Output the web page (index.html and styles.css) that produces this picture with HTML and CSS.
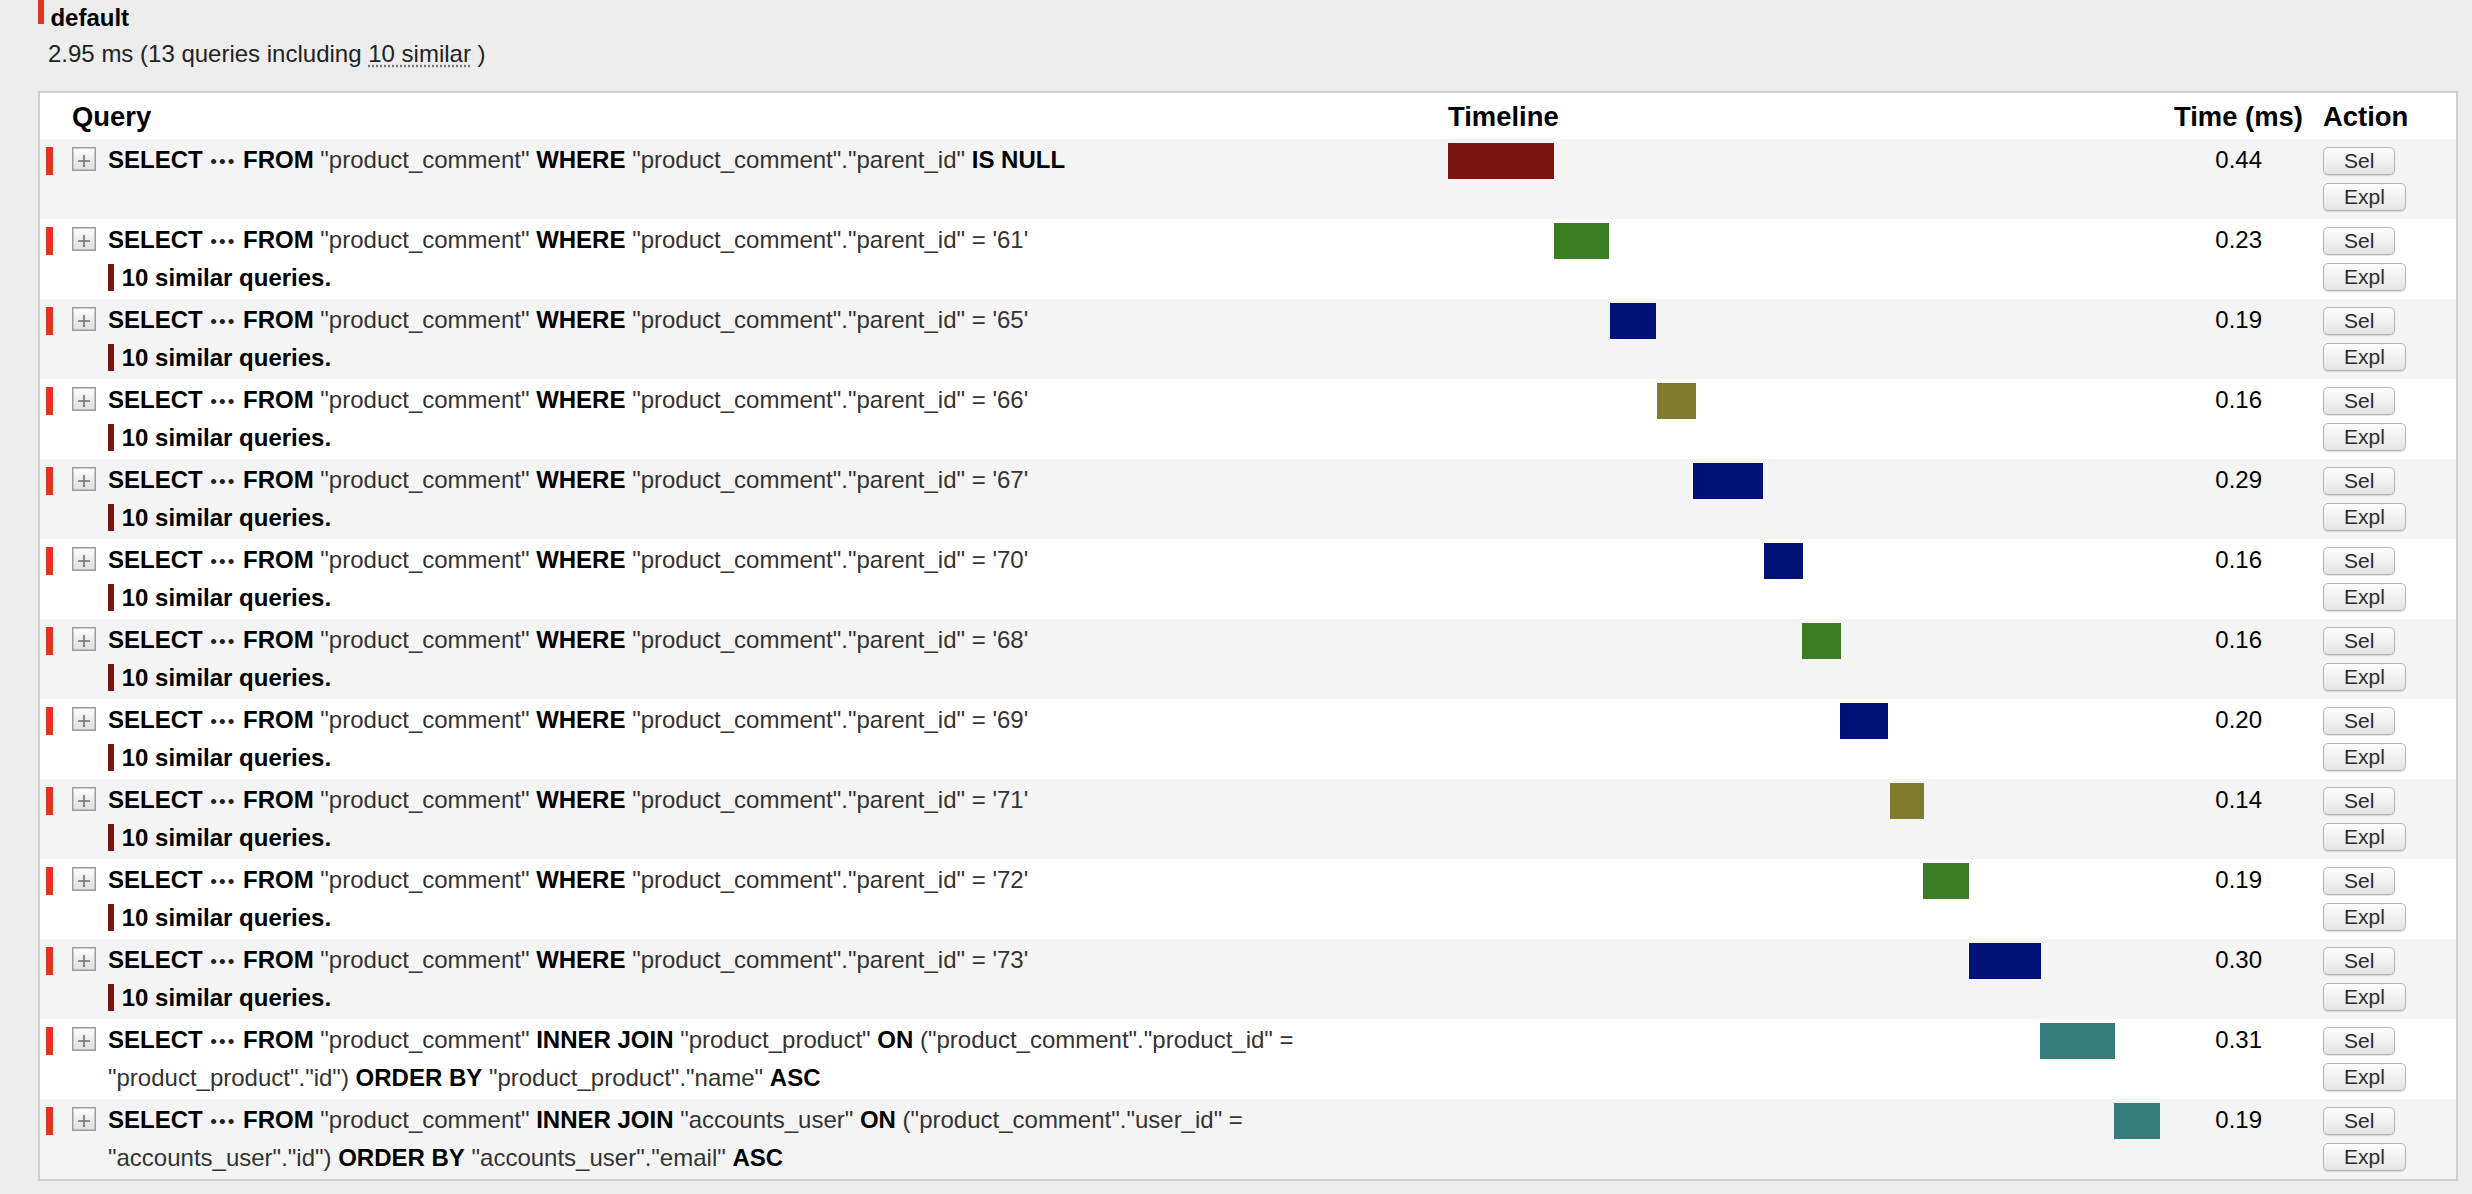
FILE: index.html
```html
<!DOCTYPE html>
<html lang="en">
<head>
<meta charset="utf-8">
<title>SQL queries</title>
<link rel="stylesheet" href="styles.css">
</head>
<body>
<div class="db-head"><span class="db-mark"></span><h4 class="db-name">default</h4></div>
<p class="db-summary">2.95 ms (13 queries including <abbr class="similar-link">10 similar</abbr> )</p>

<table class="sql-table">
  <colgroup>
    <col class="c-mark"><col class="c-query"><col class="c-timeline"><col class="c-time"><col class="c-action">
  </colgroup>
  <thead>
    <tr><th></th><th>Query</th><th>Timeline</th><th>Time (ms)</th><th>Action</th></tr>
  </thead>
  <tbody>
    <tr>
      <td class="mark"><span></span></td>
      <td class="query"><div class="qwrap"><span class="toggle"><svg width="24" height="24" viewBox="0 0 24 24"><defs><linearGradient id="tg" x1="0" y1="0" x2="0" y2="1"><stop offset="0" stop-color="#ffffff"/><stop offset="1" stop-color="#dedede"/></linearGradient></defs><rect x="0.75" y="0.75" width="22.5" height="22.5" fill="url(#tg)" stroke="#9b9b9b" stroke-width="1.5"/><path d="M6 14H18M12 8V20" stroke="#6d6d6d" stroke-width="1.6"/></svg></span><div class="qtext"><strong>SELECT</strong> <span class="dots">&#8226;&#8226;&#8226;</span> <strong>FROM</strong> "product_comment" <strong>WHERE</strong> "product_comment"."parent_id" <strong>IS NULL</strong></div></div></td>
      <td class="timeline"><div class="track"><div class="bar" style="margin-left:0%;width:14.92%;background:#781510"></div></div></td>
      <td class="time">0.44</td>
      <td class="action"><button class="btn">Sel</button><button class="btn">Expl</button></td>
    </tr>
    <tr>
      <td class="mark"><span></span></td>
      <td class="query"><div class="qwrap"><span class="toggle"><svg width="24" height="24" viewBox="0 0 24 24"><rect x="0.75" y="0.75" width="22.5" height="22.5" fill="url(#tg)" stroke="#9b9b9b" stroke-width="1.5"/><path d="M6 14H18M12 8V20" stroke="#6d6d6d" stroke-width="1.6"/></svg></span><div class="qtext"><strong>SELECT</strong> <span class="dots">&#8226;&#8226;&#8226;</span> <strong>FROM</strong> "product_comment" <strong>WHERE</strong> "product_comment"."parent_id" = '61'<div class="sim"><span>10 similar queries.</span></div></div></div></td>
      <td class="timeline"><div class="track"><div class="bar" style="margin-left:14.89%;width:7.79%;background:#3a7d22"></div></div></td>
      <td class="time">0.23</td>
      <td class="action"><button class="btn">Sel</button><button class="btn">Expl</button></td>
    </tr>
    <tr>
      <td class="mark"><span></span></td>
      <td class="query"><div class="qwrap"><span class="toggle"><svg width="24" height="24" viewBox="0 0 24 24"><rect x="0.75" y="0.75" width="22.5" height="22.5" fill="url(#tg)" stroke="#9b9b9b" stroke-width="1.5"/><path d="M6 14H18M12 8V20" stroke="#6d6d6d" stroke-width="1.6"/></svg></span><div class="qtext"><strong>SELECT</strong> <span class="dots">&#8226;&#8226;&#8226;</span> <strong>FROM</strong> "product_comment" <strong>WHERE</strong> "product_comment"."parent_id" = '65'<div class="sim"><span>10 similar queries.</span></div></div></div></td>
      <td class="timeline"><div class="track"><div class="bar" style="margin-left:22.75%;width:6.45%;background:#001277"></div></div></td>
      <td class="time">0.19</td>
      <td class="action"><button class="btn">Sel</button><button class="btn">Expl</button></td>
    </tr>
    <tr>
      <td class="mark"><span></span></td>
      <td class="query"><div class="qwrap"><span class="toggle"><svg width="24" height="24" viewBox="0 0 24 24"><rect x="0.75" y="0.75" width="22.5" height="22.5" fill="url(#tg)" stroke="#9b9b9b" stroke-width="1.5"/><path d="M6 14H18M12 8V20" stroke="#6d6d6d" stroke-width="1.6"/></svg></span><div class="qtext"><strong>SELECT</strong> <span class="dots">&#8226;&#8226;&#8226;</span> <strong>FROM</strong> "product_comment" <strong>WHERE</strong> "product_comment"."parent_id" = '66'<div class="sim"><span>10 similar queries.</span></div></div></div></td>
      <td class="timeline"><div class="track"><div class="bar" style="margin-left:29.35%;width:5.42%;background:#807a2a"></div></div></td>
      <td class="time">0.16</td>
      <td class="action"><button class="btn">Sel</button><button class="btn">Expl</button></td>
    </tr>
    <tr>
      <td class="mark"><span></span></td>
      <td class="query"><div class="qwrap"><span class="toggle"><svg width="24" height="24" viewBox="0 0 24 24"><rect x="0.75" y="0.75" width="22.5" height="22.5" fill="url(#tg)" stroke="#9b9b9b" stroke-width="1.5"/><path d="M6 14H18M12 8V20" stroke="#6d6d6d" stroke-width="1.6"/></svg></span><div class="qtext"><strong>SELECT</strong> <span class="dots">&#8226;&#8226;&#8226;</span> <strong>FROM</strong> "product_comment" <strong>WHERE</strong> "product_comment"."parent_id" = '67'<div class="sim"><span>10 similar queries.</span></div></div></div></td>
      <td class="timeline"><div class="track"><div class="bar" style="margin-left:34.41%;width:9.83%;background:#001277"></div></div></td>
      <td class="time">0.29</td>
      <td class="action"><button class="btn">Sel</button><button class="btn">Expl</button></td>
    </tr>
    <tr>
      <td class="mark"><span></span></td>
      <td class="query"><div class="qwrap"><span class="toggle"><svg width="24" height="24" viewBox="0 0 24 24"><rect x="0.75" y="0.75" width="22.5" height="22.5" fill="url(#tg)" stroke="#9b9b9b" stroke-width="1.5"/><path d="M6 14H18M12 8V20" stroke="#6d6d6d" stroke-width="1.6"/></svg></span><div class="qtext"><strong>SELECT</strong> <span class="dots">&#8226;&#8226;&#8226;</span> <strong>FROM</strong> "product_comment" <strong>WHERE</strong> "product_comment"."parent_id" = '70'<div class="sim"><span>10 similar queries.</span></div></div></div></td>
      <td class="timeline"><div class="track"><div class="bar" style="margin-left:44.38%;width:5.42%;background:#001277"></div></div></td>
      <td class="time">0.16</td>
      <td class="action"><button class="btn">Sel</button><button class="btn">Expl</button></td>
    </tr>
    <tr>
      <td class="mark"><span></span></td>
      <td class="query"><div class="qwrap"><span class="toggle"><svg width="24" height="24" viewBox="0 0 24 24"><rect x="0.75" y="0.75" width="22.5" height="22.5" fill="url(#tg)" stroke="#9b9b9b" stroke-width="1.5"/><path d="M6 14H18M12 8V20" stroke="#6d6d6d" stroke-width="1.6"/></svg></span><div class="qtext"><strong>SELECT</strong> <span class="dots">&#8226;&#8226;&#8226;</span> <strong>FROM</strong> "product_comment" <strong>WHERE</strong> "product_comment"."parent_id" = '68'<div class="sim"><span>10 similar queries.</span></div></div></div></td>
      <td class="timeline"><div class="track"><div class="bar" style="margin-left:49.72%;width:5.42%;background:#3a7d22"></div></div></td>
      <td class="time">0.16</td>
      <td class="action"><button class="btn">Sel</button><button class="btn">Expl</button></td>
    </tr>
    <tr>
      <td class="mark"><span></span></td>
      <td class="query"><div class="qwrap"><span class="toggle"><svg width="24" height="24" viewBox="0 0 24 24"><rect x="0.75" y="0.75" width="22.5" height="22.5" fill="url(#tg)" stroke="#9b9b9b" stroke-width="1.5"/><path d="M6 14H18M12 8V20" stroke="#6d6d6d" stroke-width="1.6"/></svg></span><div class="qtext"><strong>SELECT</strong> <span class="dots">&#8226;&#8226;&#8226;</span> <strong>FROM</strong> "product_comment" <strong>WHERE</strong> "product_comment"."parent_id" = '69'<div class="sim"><span>10 similar queries.</span></div></div></div></td>
      <td class="timeline"><div class="track"><div class="bar" style="margin-left:55.06%;width:6.78%;background:#001277"></div></div></td>
      <td class="time">0.20</td>
      <td class="action"><button class="btn">Sel</button><button class="btn">Expl</button></td>
    </tr>
    <tr>
      <td class="mark"><span></span></td>
      <td class="query"><div class="qwrap"><span class="toggle"><svg width="24" height="24" viewBox="0 0 24 24"><rect x="0.75" y="0.75" width="22.5" height="22.5" fill="url(#tg)" stroke="#9b9b9b" stroke-width="1.5"/><path d="M6 14H18M12 8V20" stroke="#6d6d6d" stroke-width="1.6"/></svg></span><div class="qtext"><strong>SELECT</strong> <span class="dots">&#8226;&#8226;&#8226;</span> <strong>FROM</strong> "product_comment" <strong>WHERE</strong> "product_comment"."parent_id" = '71'<div class="sim"><span>10 similar queries.</span></div></div></div></td>
      <td class="timeline"><div class="track"><div class="bar" style="margin-left:62.08%;width:4.75%;background:#807a2a"></div></div></td>
      <td class="time">0.14</td>
      <td class="action"><button class="btn">Sel</button><button class="btn">Expl</button></td>
    </tr>
    <tr>
      <td class="mark"><span></span></td>
      <td class="query"><div class="qwrap"><span class="toggle"><svg width="24" height="24" viewBox="0 0 24 24"><rect x="0.75" y="0.75" width="22.5" height="22.5" fill="url(#tg)" stroke="#9b9b9b" stroke-width="1.5"/><path d="M6 14H18M12 8V20" stroke="#6d6d6d" stroke-width="1.6"/></svg></span><div class="qtext"><strong>SELECT</strong> <span class="dots">&#8226;&#8226;&#8226;</span> <strong>FROM</strong> "product_comment" <strong>WHERE</strong> "product_comment"."parent_id" = '72'<div class="sim"><span>10 similar queries.</span></div></div></div></td>
      <td class="timeline"><div class="track"><div class="bar" style="margin-left:66.71%;width:6.45%;background:#3a7d22"></div></div></td>
      <td class="time">0.19</td>
      <td class="action"><button class="btn">Sel</button><button class="btn">Expl</button></td>
    </tr>
    <tr>
      <td class="mark"><span></span></td>
      <td class="query"><div class="qwrap"><span class="toggle"><svg width="24" height="24" viewBox="0 0 24 24"><rect x="0.75" y="0.75" width="22.5" height="22.5" fill="url(#tg)" stroke="#9b9b9b" stroke-width="1.5"/><path d="M6 14H18M12 8V20" stroke="#6d6d6d" stroke-width="1.6"/></svg></span><div class="qtext"><strong>SELECT</strong> <span class="dots">&#8226;&#8226;&#8226;</span> <strong>FROM</strong> "product_comment" <strong>WHERE</strong> "product_comment"."parent_id" = '73'<div class="sim"><span>10 similar queries.</span></div></div></div></td>
      <td class="timeline"><div class="track"><div class="bar" style="margin-left:73.17%;width:10.17%;background:#001277"></div></div></td>
      <td class="time">0.30</td>
      <td class="action"><button class="btn">Sel</button><button class="btn">Expl</button></td>
    </tr>
    <tr>
      <td class="mark"><span></span></td>
      <td class="query"><div class="qwrap"><span class="toggle"><svg width="24" height="24" viewBox="0 0 24 24"><rect x="0.75" y="0.75" width="22.5" height="22.5" fill="url(#tg)" stroke="#9b9b9b" stroke-width="1.5"/><path d="M6 14H18M12 8V20" stroke="#6d6d6d" stroke-width="1.6"/></svg></span><div class="qtext"><strong>SELECT</strong> <span class="dots">&#8226;&#8226;&#8226;</span> <strong>FROM</strong> "product_comment" <strong>INNER JOIN</strong> "product_product" <strong>ON</strong> ("product_comment"."product_id" = "product_product"."id") <strong>ORDER BY</strong> "product_product"."name" <strong>ASC</strong></div></div></td>
      <td class="timeline"><div class="track"><div class="bar" style="margin-left:83.15%;width:10.51%;background:#357c7d"></div></div></td>
      <td class="time">0.31</td>
      <td class="action"><button class="btn">Sel</button><button class="btn">Expl</button></td>
    </tr>
    <tr>
      <td class="mark"><span></span></td>
      <td class="query"><div class="qwrap"><span class="toggle"><svg width="24" height="24" viewBox="0 0 24 24"><rect x="0.75" y="0.75" width="22.5" height="22.5" fill="url(#tg)" stroke="#9b9b9b" stroke-width="1.5"/><path d="M6 14H18M12 8V20" stroke="#6d6d6d" stroke-width="1.6"/></svg></span><div class="qtext"><strong>SELECT</strong> <span class="dots">&#8226;&#8226;&#8226;</span> <strong>FROM</strong> "product_comment" <strong>INNER JOIN</strong> "accounts_user" <strong>ON</strong> ("product_comment"."user_id" = "accounts_user"."id") <strong>ORDER BY</strong> "accounts_user"."email" <strong>ASC</strong></div></div></td>
      <td class="timeline"><div class="track"><div class="bar" style="margin-left:93.54%;width:6.45%;background:#357c7d"></div></div></td>
      <td class="time">0.19</td>
      <td class="action"><button class="btn">Sel</button><button class="btn">Expl</button></td>
    </tr>
  </tbody>
</table>
</body>
</html>
```

FILE: styles.css
```css
html, body {
  margin: 0;
  padding: 0;
}
body {
  background: #ededed;
  font-family: "Liberation Sans", Arial, Helvetica, sans-serif;
  font-size: 24px;
  color: #222;
  width: 2472px;
  height: 1194px;
  overflow: hidden;
}

.db-head {
  display: flex;
  align-items: flex-start;
  padding-left: 38px;
}
.db-mark {
  display: block;
  width: 6px;
  height: 24px;
  background: #e8321f;
}
.db-name {
  margin: 0 0 0 6.4px;
  padding-top: 6px;
  font-size: 24px;
  line-height: 24px;
  font-weight: bold;
  color: #000;
}

.db-summary {
  margin: 9px 0 22px 48px;
  line-height: 30px;
  color: #222;
}
.similar-link {
  text-decoration: underline dotted #777;
  text-underline-offset: 3px;
}

.sql-table {
  margin-left: 38px;
  width: 2420px;
  table-layout: fixed;
  border-collapse: separate;
  border-spacing: 0;
  border: 2px solid #cfcfcf;
  background: #fff;
}
.c-mark { width: 26px; }
.c-query { width: 1376px; }
.c-timeline { width: 726px; }
.c-time { width: 149px; }
.c-action { width: 139px; }

.sql-table th {
  text-align: left;
  font-size: 27.4px;
  font-weight: bold;
  color: #000;
  line-height: 45px;
  padding: 1px 6px 0;
  background: #fff;
}

.sql-table tbody tr {
  height: 80px;
}
.sql-table tbody tr:nth-child(odd) {
  background: #f4f4f4;
}
.sql-table tbody tr:nth-child(even) {
  background: #fff;
}
.sql-table td {
  vertical-align: top;
  padding: 2.6px 6px 0;
  line-height: 36.7px;
}

.mark span {
  display: block;
  width: 7px;
  height: 28.3px;
  margin-top: 5.1px;
  background: #e8321f;
}

.qwrap {
  display: flex;
  align-items: flex-start;
  gap: 12px;
}
.toggle {
  flex: none;
  display: block;
  width: 24px;
  height: 24px;
  margin-top: 5.1px;
}
.toggle svg {
  display: block;
}
.qtext {
  flex: 1;
  min-width: 0;
  color: #333;
}
.qtext strong {
  color: #000;
  font-weight: bold;
}
.dots {
  color: #222;
  font-size: 19px;
  letter-spacing: 2px;
  margin-left: 1px;
}
.sim span {
  border-left: 6px solid #77150f;
  padding-left: 7.7px;
  font-weight: bold;
  color: #000;
}

.timeline {
  padding-top: 4px !important;
}
.track {
  width: 712px;
  height: 36px;
}
.bar {
  height: 36px;
}

.time {
  text-align: right;
  padding-right: 55px !important;
  color: #000;
}

.action .btn {
  display: block;
  height: 28.3px;
  margin: 5.1px 0 0;
  padding: 0 20px;
  border: 1px solid #b3b3b3;
  border-radius: 5px;
  background: linear-gradient(#fdfdfd, #e4e4e4);
  box-shadow: 0 1px 1px rgba(0, 0, 0, 0.12);
  font-family: "Liberation Sans", Arial, Helvetica, sans-serif;
  font-size: 21px;
  line-height: 26px;
  color: #2c2c2c;
}
.action .btn + .btn {
  margin-top: 8px;
}
```
